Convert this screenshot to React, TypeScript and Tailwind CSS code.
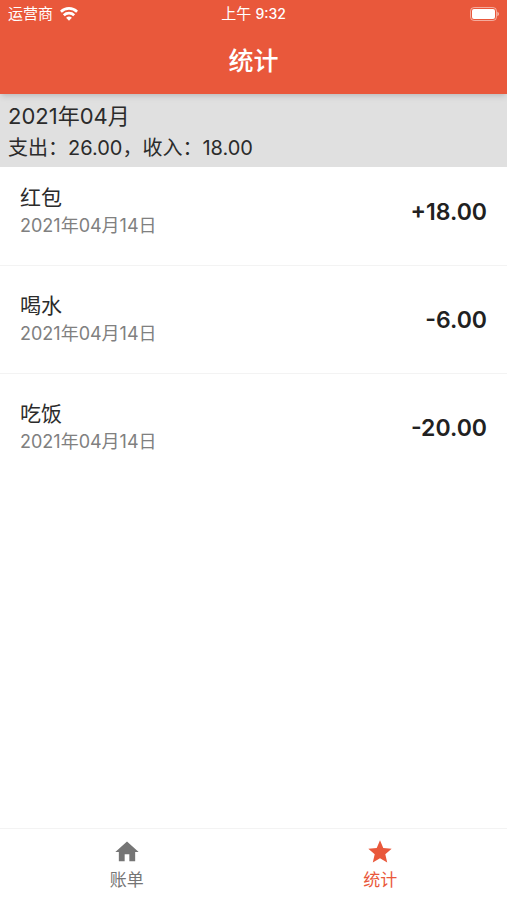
type Item = {
    id: number
    name: string
    date: string
    amount: string
}

const items: Item[] = [
    { id: 1, name: "红包", date: "2021年04月14日", amount: "+18.00" },
    { id: 2, name: "喝水", date: "2021年04月14日", amount: "-6.00" },
    { id: 3, name: "吃饭", date: "2021年04月14日", amount: "-20.00" },
]

function StatusBar() {
    return (
        <div className="grid grid-cols-3 items-center h-7 px-2 text-[15px] text-white">
            <div className="flex items-center gap-[7px]">
                <span>运营商</span>
                <svg width="18" height="14" viewBox="0 0 18 14" fill="none" stroke="currentColor" strokeWidth="2.7">
                    <path d="M0.9 4.7a11.7 11.7 0 0 1 16.2 0" />
                    <path d="M3.8 8.2a7.5 7.5 0 0 1 10.4 0" />
                    <path d="M9 13.8l-2.9-3a4.2 4.2 0 0 1 5.8 0z" fill="currentColor" stroke="none" />
                </svg>
            </div>
            <span className="text-center">
                上午 <span className="text-sm font-medium">9:32</span>
            </span>
            <svg className="justify-self-end" width="30" height="14" viewBox="0 0 30 14">
                <rect x="1.5" y="0.5" width="26" height="13" rx="3.6" fill="none" stroke="#fff" strokeOpacity="0.5" />
                <rect x="3" y="2" width="23" height="10" rx="2" fill="#fff" />
                <path d="M28.4 4.8c2 .7 2 3.7 0 4.4z" fill="#fff" fillOpacity="0.6" />
            </svg>
        </div>
    )
}

export default function App() {
    return (
        <div className="flex flex-col min-h-screen bg-white text-[#2b2b2b] font-['Inter','Noto_Sans_CJK_SC',sans-serif]">
            <header className="relative bg-[#e9583b] shadow-md">
                <StatusBar />
                <h1 className="h-[66px] pt-[17px] text-center text-[25px] leading-8 font-medium text-white">统计</h1>
            </header>

            <main className="flex-1">
                <section className="h-[73px] px-2 pt-1 bg-[#e0e0e0]">
                    <h2 className="text-[22px] leading-9">2021年04月</h2>
                    <p className="text-xl leading-7">支出：26.00，收入：18.00</p>
                </section>

                <ul>
                    {items.map((item) => (
                        <li
                            key={item.id}
                            className="flex items-center justify-between px-5 pt-[26px] first:pt-[17px] pb-[25px] border-b border-[#f3f3f3] last:border-b-0"
                        >
                            <div>
                                <p className="text-[21px] leading-7">{item.name}</p>
                                <p className="text-lg leading-7 text-[#808080]">{item.date}</p>
                            </div>
                            <span className="text-[23px] leading-7 font-semibold text-[#212121]">{item.amount}</span>
                        </li>
                    ))}
                </ul>
            </main>

            <nav className="grid grid-cols-2 h-[72px] border-t border-[#f3f3f3]">
                <button className="flex flex-col items-center gap-1 pt-[9px] text-[#757575]">
                    <svg className="w-7 h-7" viewBox="0 0 24 24" fill="currentColor">
                        <path d="M10 20v-6h4v6h5v-8h3L12 3 2 12h3v8z" />
                    </svg>
                    <span className="text-[17px] leading-5">账单</span>
                </button>
                <button className="flex flex-col items-center gap-1 pt-[9px] text-[#e9583b]">
                    <svg className="w-7 h-7" viewBox="0 0 24 24" fill="currentColor">
                        <path d="M12 17.27L18.18 21l-1.64-7.03L22 9.24l-7.19-.61L12 2 9.19 8.63 2 9.24l5.46 4.73L5.82 21z" />
                    </svg>
                    <span className="text-[17px] leading-5">统计</span>
                </button>
            </nav>
        </div>
    )
}
